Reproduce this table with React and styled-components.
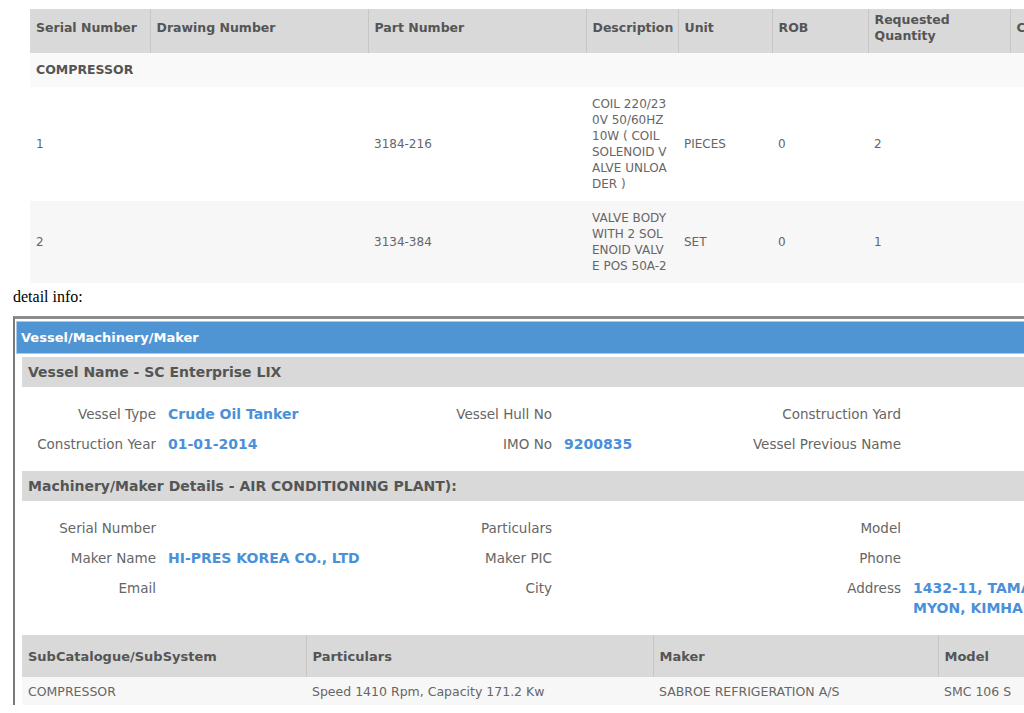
import React from "react";
import styled, { createGlobalStyle } from "styled-components";

const GlobalStyle = createGlobalStyle`
  html, body {
    margin: 0;
    padding: 0;
    background: #ffffff;
    overflow: hidden;
  }
  body {
    font-family: "Liberation Serif", serif;
  }
`;

const FONT = `"DejaVu Sans", Tahoma, Verdana, sans-serif`;

const Page = styled.div`
  padding: 9px 0 0 13px;
  width: 1240px;
`;

const PartsTable = styled.table`
  margin-left: 17px;
  border-collapse: collapse;
  table-layout: fixed;
  width: 1060px;
  font-family: ${FONT};
  font-size: 12px;
  line-height: 16px;
  color: #666;

  th {
    background: #d9d9d9;
    color: #555;
    font-weight: bold;
    font-size: 12.5px;
    text-align: left;
    padding: 3px 6px 9px;
    border-left: 1px solid #c6c6c6;
    vertical-align: middle;
    height: 32px;
  }
  th:first-child {
    border-left: none;
  }
  td {
    padding: 9px 6px;
    vertical-align: middle;
  }
`;

const Col = styled.col`
  width: ${(p) => p.$w}px;
`;

const Row = styled.tr`
  background: ${(p) => p.$bg || "#ffffff"};
`;

const GroupCell = styled.td`
  font-weight: bold;
  font-size: 12.5px;
  color: #555;
`;

const DescLine = styled.span`
  display: block;
  white-space: nowrap;
`;

const Caption = styled.div`
  font-family: "Liberation Serif", serif;
  font-size: 16px;
  line-height: 18px;
  color: #000;
  margin: 5px 0 10px;
`;

const Panel = styled.div`
  border-top: 3px solid #8c8c8c;
  border-left: 2px solid #7a7a7a;
  padding: 2px 0 0 1px;
  font-family: ${FONT};
`;

const PanelHeader = styled.div`
  background: #4f95d4;
  border: 1px solid #a9c9ea;
  border-right: none;
  color: #fff;
  font-weight: bold;
  font-size: 13px;
  height: 31px;
  line-height: 31px;
  padding-left: 4px;
`;

const PanelBody = styled.div`
  padding: 3px 0 0 6px;
`;

const SectionBar = styled.div`
  background: #d9d9d9;
  color: #555;
  font-weight: bold;
  font-size: 14px;
  height: 30px;
  line-height: 30px;
  padding-left: 6px;
`;

const FieldGrid = styled.div`
  display: grid;
  grid-template-columns: 134px 220px 152px 150px 175px 240px;
  column-gap: 12px;
  padding: 12px 0;
  line-height: 20px;
`;

const Label = styled.div`
  text-align: right;
  color: #666;
  font-size: 13.5px;
  white-space: nowrap;
  padding: 5px 0;
`;

const Value = styled.div`
  color: #4a90d9;
  font-weight: bold;
  font-size: 14px;
  padding: 5px 0;
`;

const SubTable = styled.table`
  border-collapse: collapse;
  table-layout: fixed;
  width: 1100px;
  font-size: 12.5px;

  th {
    background: #d9d9d9;
    color: #555;
    font-weight: bold;
    font-size: 13px;
    text-align: left;
    padding: 0 6px;
    height: 42px;
    border-left: 1px solid #c6c6c6;
  }
  th:first-child {
    border-left: none;
  }
  td {
    background: #f7f7f7;
    color: #666;
    padding: 0 6px;
    height: 28px;
  }
`;

const partCols = [120, 218, 218, 92, 94, 96, 142, 80];
const subCols = [284, 347, 285, 184];

const parts = [
  {
    serial: "1",
    drawing: "",
    part: "3184-216",
    desc: ["COIL 220/23", "0V 50/60HZ", "10W ( COIL", "SOLENOID V", "ALVE UNLOA", "DER )"],
    unit: "PIECES",
    rob: "0",
    qty: "2",
    bg: "#ffffff",
  },
  {
    serial: "2",
    drawing: "",
    part: "3134-384",
    desc: ["VALVE BODY", "WITH 2 SOL", "ENOID VALV", "E POS 50A-2"],
    unit: "SET",
    rob: "0",
    qty: "1",
    bg: "#f7f7f7",
  },
];

const vesselFields = [
  ["Vessel Type", "Crude Oil Tanker", "Vessel Hull No", "", "Construction Yard", ""],
  ["Construction Year", "01-01-2014", "IMO No", "9200835", "Vessel Previous Name", ""],
];

const makerFields = [
  ["Serial Number", "", "Particulars", "", "Model", ""],
  ["Maker Name", "HI-PRES KOREA CO., LTD", "Maker PIC", "", "Phone", ""],
  ["Email", "", "City", "", "Address", "1432-11, TAMA-RI, JINLYE-MYON, KIMHAE-SI"],
];

function Fields({ rows }) {
  return (
    <FieldGrid>
      {rows.map((r, i) =>
        r.map((cell, j) =>
          j % 2 === 0 ? (
            <Label key={`${i}-${j}`}>{cell}</Label>
          ) : (
            <Value key={`${i}-${j}`}>{cell}</Value>
          )
        )
      )}
    </FieldGrid>
  );
}

export default function App() {
  return (
    <>
      <GlobalStyle />
      <Page>
        <PartsTable>
          <colgroup>
            {partCols.map((w, i) => (
              <Col key={i} $w={w} />
            ))}
          </colgroup>
          <thead>
            <tr>
              <th>Serial Number</th>
              <th>Drawing Number</th>
              <th>Part Number</th>
              <th>Description</th>
              <th>Unit</th>
              <th>ROB</th>
              <th>Requested Quantity</th>
              <th>Comments</th>
            </tr>
          </thead>
          <tbody>
            <Row $bg="#f9f9f9">
              <GroupCell colSpan={8}>COMPRESSOR</GroupCell>
            </Row>
            {parts.map((p) => (
              <Row key={p.serial} $bg={p.bg}>
                <td>{p.serial}</td>
                <td>{p.drawing}</td>
                <td>{p.part}</td>
                <td>
                  {p.desc.map((line, i) => (
                    <DescLine key={i}>{line}</DescLine>
                  ))}
                </td>
                <td>{p.unit}</td>
                <td>{p.rob}</td>
                <td>{p.qty}</td>
                <td></td>
              </Row>
            ))}
          </tbody>
        </PartsTable>

        <Caption>detail info:</Caption>

        <Panel>
          <PanelHeader>Vessel/Machinery/Maker</PanelHeader>
          <PanelBody>
            <SectionBar>Vessel Name - SC Enterprise LIX</SectionBar>
            <Fields rows={vesselFields} />
            <SectionBar>Machinery/Maker Details - AIR CONDITIONING PLANT):</SectionBar>
            <Fields rows={makerFields} />
            <SubTable>
              <colgroup>
                {subCols.map((w, i) => (
                  <Col key={i} $w={w} />
                ))}
              </colgroup>
              <thead>
                <tr>
                  <th>SubCatalogue/SubSystem</th>
                  <th>Particulars</th>
                  <th>Maker</th>
                  <th>Model</th>
                </tr>
              </thead>
              <tbody>
                <tr>
                  <td>COMPRESSOR</td>
                  <td>Speed 1410 Rpm, Capacity 171.2 Kw</td>
                  <td>SABROE REFRIGERATION A/S</td>
                  <td>SMC 106 S</td>
                </tr>
              </tbody>
            </SubTable>
          </PanelBody>
        </Panel>
      </Page>
    </>
  );
}
